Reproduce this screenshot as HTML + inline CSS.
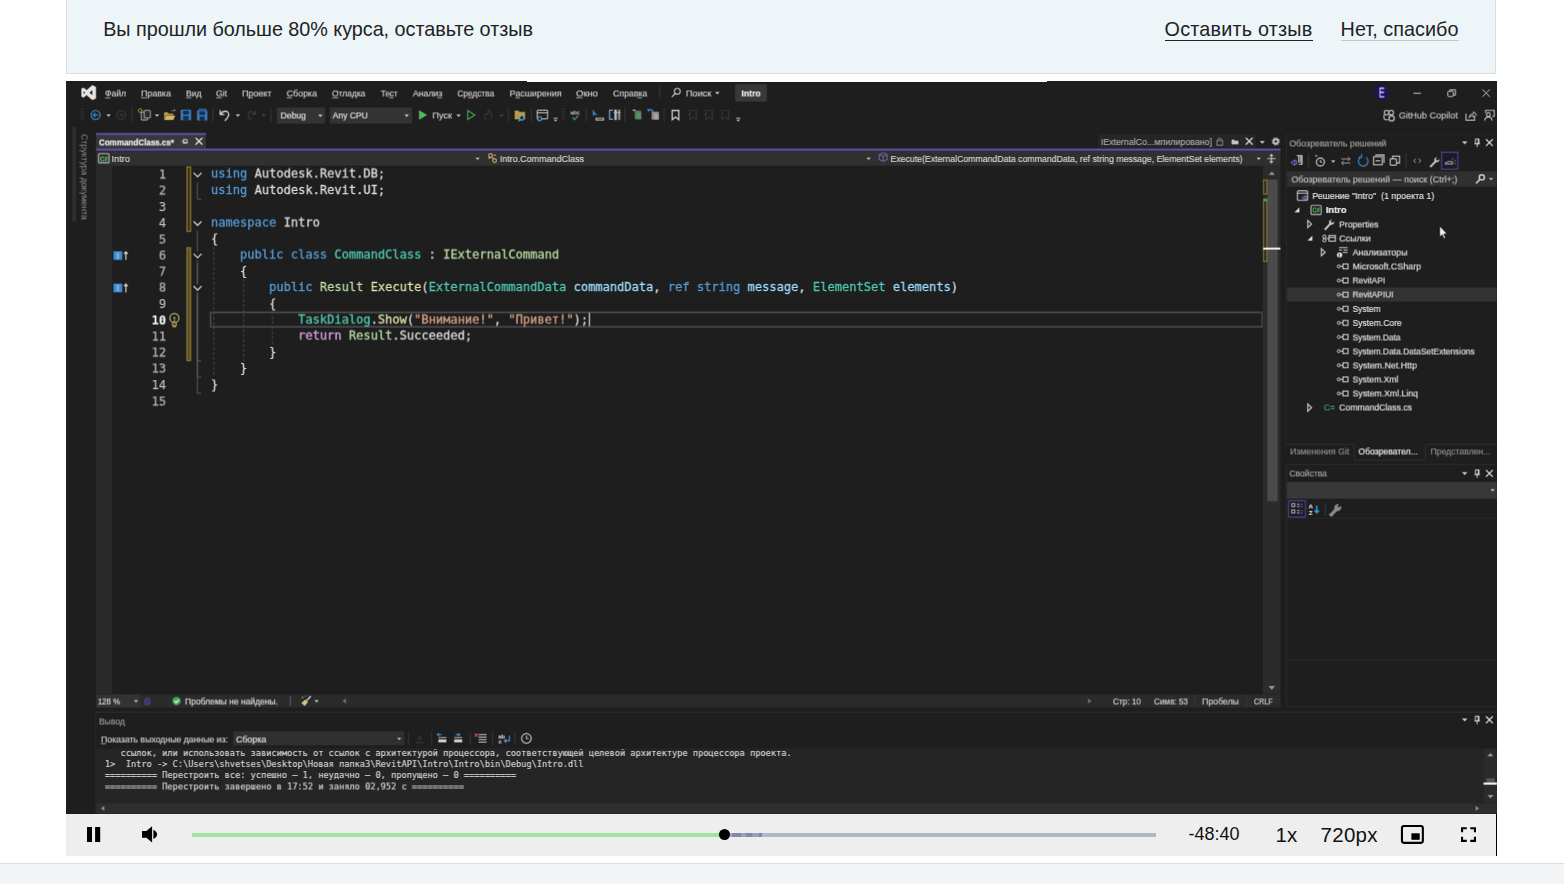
<!DOCTYPE html>
<html lang="ru">
<head>
<meta charset="utf-8">
<title>Видео</title>
<style>
html,body{margin:0;padding:0;background:#fff;}
body{width:1564px;height:884px;overflow:hidden;position:relative;font-family:"Liberation Sans",sans-serif;color:#222;}
.banner{position:absolute;left:66px;top:-16px;width:1428px;height:88px;background:#eef5f9;border:1px solid #dcdcdc;}
.banner .msg{position:absolute;left:36.2px;top:31.5px;font-size:19.8px;line-height:24px;color:#222;white-space:nowrap;letter-spacing:-0.03px;}
.banner a{position:absolute;top:31.5px;font-size:19.8px;line-height:24px;color:#222;text-decoration:none;white-space:nowrap;}
.banner a.leave{left:1097.6px;letter-spacing:0.2px;}
.banner a.no{left:1273.6px;letter-spacing:0.04px;}
.banner i{position:absolute;display:block;}
.banner i.u1{left:1098.3px;top:54.7px;width:147.4px;height:1.8px;background:#222;}
.banner i.u2{left:1274.4px;top:54.9px;width:117.4px;height:1.2px;background:#c3c7ca;}
.player{position:absolute;left:66px;top:81px;width:1431px;height:775px;background:#000;}
.player svg{position:absolute;left:-66px;top:-81px;font-family:"Liberation Sans", sans-serif;}
.topline{position:absolute;left:461px;top:0;width:520px;height:1px;background:#fff;}
.controls{position:absolute;left:0;top:733px;width:1430px;height:42px;background:#eeeeee;}
.controls svg.ic{position:absolute;left:0;top:0;}
.bar{position:absolute;left:126px;top:19px;width:964px;height:4px;background:#b0b8c8;}
.bar i{position:absolute;display:block;top:0;height:4px;}
.bar .played{position:absolute;left:0;top:0;width:531px;height:4px;background:#a0e3a0;}
.bar .knob{position:absolute;left:526.5px;top:-4.1px;width:11.1px;height:11.1px;border-radius:50%;background:#000;}
.controls .t{position:absolute;white-space:nowrap;color:#111;}
.footer{position:absolute;left:0;top:863px;width:1564px;height:21px;background:#f3f4f6;border-top:1px solid #dddddd;}
</style>
</head>
<body>
<div class="banner">
  <div class="msg">Вы прошли больше 80% курса, оставьте отзыв</div>
  <a class="leave">Оставить отзыв</a>
  <a class="no">Нет, спасибо</a>
  <i class="u1"></i><i class="u2"></i>
</div>
<div class="player">
<svg width="1564" height="884" viewBox="0 0 1564 884" xml:space="preserve" style="white-space:pre;will-change:transform;clip-path:inset(81px 67px 70px 66px)">
<g id="vsframe" transform="translate(-0.36 -0.36)">
<rect x="64" y="79" width="1435" height="737" fill="#1e1e1e" />
<path d="M92.3 85.1 L96 86.8 V98.5 L92.3 100.2 L86.6 95.2 L83.6 97.6 L81.4 96.6 V88.7 L83.6 87.7 L86.6 90.1 Z M92.4 90.2 L89.4 92.65 L92.4 95.1 Z M83.6 91.2 V94.1 L85.2 92.65 Z" fill="#e6e6e6" fill-rule="evenodd"/>
<text x="105" y="96.2" font-size="9.52" fill="#cfcfcf" textLength="21" lengthAdjust="spacingAndGlyphs"  stroke="#cfcfcf" stroke-width=".18">Файл</text>
<line x1="105" y1="97.9" x2="110.5" y2="97.9" stroke="#bdbdbd" stroke-width="0.8" />
<text x="141" y="96.2" font-size="9.52" fill="#cfcfcf" textLength="30" lengthAdjust="spacingAndGlyphs"  stroke="#cfcfcf" stroke-width=".18">Правка</text>
<line x1="141" y1="97.9" x2="147" y2="97.9" stroke="#bdbdbd" stroke-width="0.8" />
<text x="186" y="96.2" font-size="9.52" fill="#cfcfcf" textLength="15.5" lengthAdjust="spacingAndGlyphs"  stroke="#cfcfcf" stroke-width=".18">Вид</text>
<line x1="186" y1="97.9" x2="191.3" y2="97.9" stroke="#bdbdbd" stroke-width="0.8" />
<text x="216" y="96.2" font-size="9.52" fill="#cfcfcf" textLength="11" lengthAdjust="spacingAndGlyphs"  stroke="#cfcfcf" stroke-width=".18">Git</text>
<line x1="216" y1="97.9" x2="222" y2="97.9" stroke="#bdbdbd" stroke-width="0.8" />
<text x="242" y="96.2" font-size="9.52" fill="#cfcfcf" textLength="29.6" lengthAdjust="spacingAndGlyphs"  stroke="#cfcfcf" stroke-width=".18">Проект</text>
<line x1="248" y1="97.9" x2="253" y2="97.9" stroke="#bdbdbd" stroke-width="0.8" />
<text x="286.6" y="96.2" font-size="9.52" fill="#cfcfcf" textLength="30.4" lengthAdjust="spacingAndGlyphs"  stroke="#cfcfcf" stroke-width=".18">Сборка</text>
<line x1="286.6" y1="97.9" x2="292.1" y2="97.9" stroke="#bdbdbd" stroke-width="0.8" />
<text x="332" y="96.2" font-size="9.52" fill="#cfcfcf" textLength="33.4" lengthAdjust="spacingAndGlyphs"  stroke="#cfcfcf" stroke-width=".18">Отладка</text>
<line x1="332" y1="97.9" x2="338.5" y2="97.9" stroke="#bdbdbd" stroke-width="0.8" />
<text x="380.8" y="96.2" font-size="9.52" fill="#cfcfcf" textLength="16.7" lengthAdjust="spacingAndGlyphs"  stroke="#cfcfcf" stroke-width=".18">Тест</text>
<line x1="389" y1="97.9" x2="393.5" y2="97.9" stroke="#bdbdbd" stroke-width="0.8" />
<text x="412.8" y="96.2" font-size="9.52" fill="#cfcfcf" textLength="29.6" lengthAdjust="spacingAndGlyphs"  stroke="#cfcfcf" stroke-width=".18">Анализ</text>
<line x1="437.5" y1="97.9" x2="442" y2="97.9" stroke="#bdbdbd" stroke-width="0.8" />
<text x="457.3" y="96.2" font-size="9.52" fill="#cfcfcf" textLength="36.9" lengthAdjust="spacingAndGlyphs"  stroke="#cfcfcf" stroke-width=".18">Средства</text>
<line x1="468" y1="97.9" x2="473.5" y2="97.9" stroke="#bdbdbd" stroke-width="0.8" />
<text x="509.7" y="96.2" font-size="9.52" fill="#cfcfcf" textLength="51.9" lengthAdjust="spacingAndGlyphs"  stroke="#cfcfcf" stroke-width=".18">Расширения</text>
<line x1="515.5" y1="97.9" x2="520" y2="97.9" stroke="#bdbdbd" stroke-width="0.8" />
<text x="576" y="96.2" font-size="9.52" fill="#cfcfcf" textLength="22" lengthAdjust="spacingAndGlyphs"  stroke="#cfcfcf" stroke-width=".18">Окно</text>
<line x1="576" y1="97.9" x2="582.5" y2="97.9" stroke="#bdbdbd" stroke-width="0.8" />
<text x="613" y="96.2" font-size="9.52" fill="#cfcfcf" textLength="34.3" lengthAdjust="spacingAndGlyphs"  stroke="#cfcfcf" stroke-width=".18">Справка</text>
<line x1="637.5" y1="97.9" x2="642" y2="97.9" stroke="#bdbdbd" stroke-width="0.8" />
<line x1="659.7" y1="86" x2="659.7" y2="98.5" stroke="#3d3d3d" stroke-width="1" />
<circle cx="677.3" cy="91.3" r="2.9" fill="none" stroke="#c8c8c8" stroke-width="1.1" />
<line x1="675.2" y1="93.6" x2="671.8" y2="97" stroke="#c8c8c8" stroke-width="1.2" />
<text x="685.9" y="96.2" font-size="9.52" fill="#cfcfcf" textLength="25.4" lengthAdjust="spacingAndGlyphs"  stroke="#cfcfcf" stroke-width=".18">Поиск</text>
<path d="M715.1 91.9h4.4l-2.2 2.6z" fill="#c8c8c8" />
<rect x="735" y="84" width="32" height="17.6" fill="#383838" rx="1.5"/>
<text x="741.5" y="96.2" font-size="9.52" fill="#f2f2f2" textLength="19.2" lengthAdjust="spacingAndGlyphs" font-weight="bold"  stroke="#f2f2f2" stroke-width=".18">Intro</text>
<circle cx="1381.8" cy="92.5" r="7.3" fill="#20135a" />
<text x="1378.8" y="97.2" font-size="14.12" fill="#d6d0f2" textLength="5.8" lengthAdjust="spacingAndGlyphs"  stroke="#d6d0f2" stroke-width=".18">E</text>
<line x1="1413.4" y1="93.3" x2="1421" y2="93.3" stroke="#c8c8c8" stroke-width="1" />
<rect x="1447.8" y="91.3" width="5.6" height="5.2" fill="none" stroke="#c8c8c8" stroke-width="1" rx="1"/>
<path d="M1449.8 91.2 V89.8 h5.7 v5.4 h-1.8" fill="none" stroke="#c8c8c8" stroke-width="1" />
<path d="M1482.3 89.3 l7.6 7.6 M1489.9 89.3 l-7.6 7.6" fill="none" stroke="#c8c8c8" stroke-width="1" />
<line x1="81.3" y1="108.5" x2="81.3" y2="121.5" stroke="#424242" stroke-width="1.2" stroke-dasharray="1.2 1.3"/>
<line x1="83.3" y1="108.5" x2="83.3" y2="121.5" stroke="#424242" stroke-width="1.2" stroke-dasharray="1.2 1.3"/>
<circle cx="95.6" cy="115" r="4.5" fill="none" stroke="#3a80bd" stroke-width="1.4" />
<path d="M98 115 h-4.6 M95.4 112.9 l-2.1 2.1 l2.1 2.1" fill="none" stroke="#3a80bd" stroke-width="1.2" />
<path d="M106.4 114.3h4.4l-2.2 2.6z" fill="#c8c8c8" />
<circle cx="121.1" cy="115" r="4.4" fill="none" stroke="#3d3d3d" stroke-width="1.1" />
<path d="M118.8 115 h4.4 M121.3 113 l2 2 l-2 2" fill="none" stroke="#3d3d3d" stroke-width="1" />
<line x1="132" y1="108" x2="132" y2="122" stroke="#3a3a3a" stroke-width="1" />
<rect x="141.3" y="112.2" width="6.4" height="7.8" fill="#2a2a2a" stroke="#9a9a9a" stroke-width="1.1" rx="1"/>
<rect x="144.2" y="110.3" width="6.2" height="7.6" fill="#2a2a2a" stroke="#9a9a9a" stroke-width="1.1" rx="1"/>
<path d="M140.2 108.4 l2.2 2.2 l-2.2 2.2 l-2.2-2.2z" fill="#1e1e1e" stroke="#c9a94a" stroke-width="1" />
<path d="M154.8 114.3h4.4l-2.2 2.6z" fill="#c8c8c8" />
<path d="M164.2 112.4 h3.4 l1 1.2 h4.8 v1.6 h-7.2 l-2 4.6z" fill="#c4a64f" />
<path d="M166.4 115.7 h8.8 l-1.9 4.3 h-9.1z" fill="#d4b862" />
<path d="M170.8 112 q1.4-2.4 3.6-2.2 l-.3-1 1.7 1.7 -2.2 1 .3-.9 q-1.6-.1-2.4 1.4z" fill="#7fa1bd" />
<rect x="180.6" y="109.7" width="10.6" height="10.6" fill="#3a7ab8" rx="1.2"/>
<rect x="182.9" y="110.8" width="6" height="3.7" fill="#12324f" />
<rect x="183.2" y="116" width="5.4" height="4.3" fill="#12324f" />
<rect x="197" y="110.2" width="10.4" height="10.4" fill="#3a7ab8" rx="1.2"/>
<rect x="199.3" y="111.3" width="5.8" height="3.7" fill="#12324f" />
<rect x="199.6" y="116.5" width="5.2" height="4.1" fill="#12324f" />
<path d="M198.6 109.2 h8" fill="none" stroke="#3a7ab8" stroke-width="1" />
<line x1="212.8" y1="108" x2="212.8" y2="122" stroke="#3a3a3a" stroke-width="1" />
<path d="M220.2 110.2 v4.3 h4.3 M220.6 114.2 q3.2-4.6 6.8-2.4 q3.6 3-2.6 9" fill="none" stroke="#d0d0d0" stroke-width="1.35" />
<path d="M235.7 114.3h4.4l-2.2 2.6z" fill="#c8c8c8" />
<path d="M255.3 110.6 v3.8 h-3.8 M255 114.2 q-3-4-6-2 q-3 3 2.2 8" fill="none" stroke="#3d3d3d" stroke-width="1.2" />
<path d="M261.6 114.3h4.4l-2.2 2.6z" fill="#454545" />
<line x1="271" y1="108" x2="271" y2="122" stroke="#3a3a3a" stroke-width="1" />
<rect x="276.8" y="107.4" width="48.4" height="16.2" fill="#333333" />
<text x="280.5" y="118.2" font-size="9.52" fill="#e0e0e0" textLength="25.5" lengthAdjust="spacingAndGlyphs"  stroke="#e0e0e0" stroke-width=".18">Debug</text>
<path d="M318.2 114.5h4.4l-2.2 2.6z" fill="#c8c8c8" />
<rect x="329.8" y="107.4" width="82.4" height="16.2" fill="#333333" />
<text x="332.6" y="118.2" font-size="9.52" fill="#e0e0e0" textLength="35.3" lengthAdjust="spacingAndGlyphs"  stroke="#e0e0e0" stroke-width=".18">Any CPU</text>
<path d="M404.5 114.5h4.4l-2.2 2.6z" fill="#c8c8c8" />
<path d="M419 110.2 v9.6 l8.2-4.8z" fill="#52b85a" />
<text x="432.4" y="118.3" font-size="9.52" fill="#cfcfcf" textLength="19.6" lengthAdjust="spacingAndGlyphs"  stroke="#cfcfcf" stroke-width=".18">Пуск</text>
<path d="M456.4 114.5h4.4l-2.2 2.6z" fill="#c8c8c8" />
<path d="M467.8 110.6 v8.8 l7-4.4z" fill="none" stroke="#3f9b4a" stroke-width="1.3" />
<path d="M486.5 119.5 q-3.5-2.5-.5-6 q1 1.6 2.2 0 q.6-2-.6-3.6 q5.5 2.5 3.8 8 q-.6 1.4-2 1.8" fill="none" stroke="#383838" stroke-width="1.2" />
<path d="M499.2 114.5h4.4l-2.2 2.6z" fill="#454545" />
<line x1="508.4" y1="108" x2="508.4" y2="122" stroke="#3a3a3a" stroke-width="1" />
<path d="M514.7 110.6 h3.8 l1 1.2 h5.6 v7.6 h-10.4z" fill="#b99a48" />
<circle cx="521.8" cy="117.8" r="2.2" fill="#1e1e1e" stroke="#58a6e0" stroke-width="1.2" />
<line x1="520.2" y1="119.6" x2="518.6" y2="121.4" stroke="#58a6e0" stroke-width="1.2" />
<line x1="531.3" y1="108" x2="531.3" y2="122" stroke="#3a3a3a" stroke-width="1" />
<rect x="537.2" y="110.2" width="10.4" height="8.6" fill="none" stroke="#bdbdbd" stroke-width="1.1" rx="1"/>
<line x1="537.2" y1="112.8" x2="547.6" y2="112.8" stroke="#bdbdbd" stroke-width="1.1" />
<circle cx="539.6" cy="118.6" r="2" fill="#1e1e1e" stroke="#58a6e0" stroke-width="1.1" />
<line x1="553.6" y1="118.2" x2="557.6" y2="118.2" stroke="#bdbdbd" stroke-width="1" />
<path d="M553.8 119.6h3.6l-1.8 2z" fill="#c8c8c8" />
<line x1="562.3" y1="108.5" x2="562.3" y2="121.5" stroke="#424242" stroke-width="1.2" stroke-dasharray="1.2 1.3"/>
<line x1="564.3" y1="108.5" x2="564.3" y2="121.5" stroke="#424242" stroke-width="1.2" stroke-dasharray="1.2 1.3"/>
<text x="570.3" y="114.4" font-size="6.2" fill="#bdbdbd" textLength="9.7" lengthAdjust="spacingAndGlyphs"  stroke="#bdbdbd" stroke-width=".18">abc</text>
<path d="M572.6 117.4 l2 2.2 l3.6-4" fill="none" stroke="#459a50" stroke-width="1.3" />
<line x1="586.3" y1="108" x2="586.3" y2="122" stroke="#3a3a3a" stroke-width="1" />
<path d="M592.8 109.4 v6.8 l1.8-1.6 l3 1.6z" fill="#3f86c8" />
<rect x="595.6" y="117.6" width="8.4" height="3" fill="#bdbdbd" />
<rect x="596.8" y="118.4" width="6" height="1.2" fill="#3c3c3c" />
<path d="M613 110.2 h-3.4 v9 h3.4" fill="none" stroke="#7fb4e0" stroke-width="1.1" />
<rect x="614.4" y="109.6" width="2.4" height="10.4" fill="#bdbdbd" />
<rect x="618" y="109.6" width="2.4" height="10.4" fill="#8a8a8a" />
<line x1="613.6" y1="112.6" x2="620.6" y2="112.6" stroke="#bdbdbd" stroke-width="1" />
<line x1="624.8" y1="108" x2="624.8" y2="122" stroke="#3a3a3a" stroke-width="1" />
<rect x="634.6" y="110.6" width="6.6" height="8.6" fill="#4f7a52" />
<rect x="632.6" y="109.6" width="3" height="1.2" fill="#bdbdbd" />
<rect x="636.4" y="112.4" width="4.8" height="6.8" fill="#5d8f61" />
<rect x="651.6" y="111.6" width="7.2" height="8" fill="#8a8a8a" />
<rect x="653.8" y="113.6" width="5" height="6" fill="#a3a3a3" />
<path d="M648 110.8 q2.6-2.6 4.8 0 l-1.2 1.4 M648 110.8 v-1.8 M648 110.8 h1.8" fill="none" stroke="#3f8fd0" stroke-width="1.2" />
<line x1="664" y1="108" x2="664" y2="122" stroke="#3a3a3a" stroke-width="1" />
<path d="M672.2 110.4 h6.6 v9.4 l-3.3-2.8 l-3.3 2.8z" fill="none" stroke="#d0d0d0" stroke-width="1.3" />
<path d="M689.8 110.4 h6.6 v9.4 l-3.3-2.8 l-3.3 2.8z" fill="none" stroke="#383838" stroke-width="1.1" />
<path d="M705.8 110.4 h6.6 v9.4 l-3.3-2.8 l-3.3 2.8z" fill="none" stroke="#383838" stroke-width="1.1" />
<path d="M722 110.4 h6.6 v9.4 l-3.3-2.8 l-3.3 2.8z" fill="none" stroke="#383838" stroke-width="1.1" />
<line x1="688" y1="114" x2="691" y2="114" stroke="#383838" stroke-width="1" />
<line x1="704" y1="114" x2="707" y2="114" stroke="#383838" stroke-width="1" />
<line x1="736" y1="118.2" x2="740.4" y2="118.2" stroke="#bdbdbd" stroke-width="1" />
<path d="M736.4 119.6h3.6l-1.8 2z" fill="#c8c8c8" />
<circle cx="1386.6" cy="112.6" r="2.3" fill="none" stroke="#c0c0c0" stroke-width="1.1" />
<circle cx="1391.2" cy="112.6" r="2.3" fill="none" stroke="#c0c0c0" stroke-width="1.1" />
<path d="M1384 114.6 v3.4 q0 1.8 2 1.8 h2" fill="none" stroke="#c0c0c0" stroke-width="1.1" />
<circle cx="1391.6" cy="118.4" r="2.6" fill="#1e1e1e" stroke="#c0c0c0" stroke-width="1.3" />
<text x="1398.8" y="118.6" font-size="9.52" fill="#c4c4c4" textLength="59" lengthAdjust="spacingAndGlyphs"  stroke="#c4c4c4" stroke-width=".18">GitHub Copilot</text>
<path d="M1466 113.6 v6.6 h8.6 v-3" fill="none" stroke="#c0c0c0" stroke-width="1.1" />
<path d="M1469 117.6 q.6-4 4.6-4 v-2 l3 3 l-3 3 v-2 q-2.6 0-4.6 2z" fill="none" stroke="#c0c0c0" stroke-width="1" />
<path d="M1485.6 113 v-2.6 h8.6 v6 h-2" fill="none" stroke="#c0c0c0" stroke-width="1.1" />
<circle cx="1488.4" cy="114.6" r="1.9" fill="none" stroke="#c0c0c0" stroke-width="1.1" />
<path d="M1484.6 120.6 q.6-3.6 3.8-3.6 q3.2 0 3.8 3.6" fill="none" stroke="#c0c0c0" stroke-width="1.1" />
<rect x="72.3" y="127" width="3.8" height="94.5" fill="#303030" />
<text transform='translate(81.2 134.2) rotate(90)' font-size='8.6' fill='#8f8f8f' textLength='85.5' lengthAdjust='spacingAndGlyphs'>Структура документа</text>
<rect x="96" y="133" width="110" height="15.5" fill="#383838" />
<rect x="96" y="133" width="110" height="2" fill="#5751a3" />
<text x="99" y="145.5" font-size="9.52" fill="#f4f4f4" textLength="75" lengthAdjust="spacingAndGlyphs" font-weight="bold"  stroke="#f4f4f4" stroke-width=".18">CommandClass.cs*</text>
<path d="M181.6 141.4 h2 M183.6 138.8 v5.2 M183.6 139.6 h3.6 v3.6 h-3.6 M183.6 142.4 h3.6" fill="none" stroke="#cfcfcf" stroke-width="1" />
<path d="M195.6 137.8 l6.8 6.8 M202.4 137.8 l-6.8 6.8" fill="none" stroke="#e6e6e6" stroke-width="1.3" />
<rect x="1098" y="134" width="158" height="14" fill="#262626" />
<text x="1100.8" y="145" font-size="9.52" fill="#a8a8a8" textLength="111.2" lengthAdjust="spacingAndGlyphs"  stroke="#a8a8a8" stroke-width=".18">IExternalCo...мпилировано]</text>
<rect x="1217" y="140.6" width="5.6" height="4.6" fill="none" stroke="#8a8a8a" stroke-width="1"/>
<path d="M1218.2 140.4 v-1.4 q1.6-2 3.2 0 v1.4" fill="none" stroke="#8a8a8a" stroke-width="1" />
<path d="M1231.6 139.6 h2.4 l.8 1 h3.6 v3.8 h-6.8z" fill="#c4c4c4" />
<path d="M1245.8 137.8 l6.8 6.8 M1252.6 137.8 l-6.8 6.8" fill="none" stroke="#dcdcdc" stroke-width="1.3" />
<path d="M1259.8 141h5l-2.5 2.8z" fill="#c8c8c8" />
<circle cx="1275.8" cy="141.4" r="2.2" fill="none" stroke="#c4c4c4" stroke-width="1.9" />
<circle cx="1275.8" cy="141.4" r="3.6" fill="none" stroke="#c4c4c4" stroke-width="1.1" stroke-dasharray="1.4 1.43"/>
<rect x="96" y="148.5" width="1184.5" height="2.4" fill="#5751a3" />
<rect x="96" y="150.9" width="1184.5" height="15.2" fill="#303030" />
<rect x="98.6" y="153.6" width="10.4" height="9.2" fill="none" stroke="#b8b8b8" stroke-width="1.1" rx="1"/>
<text x="100" y="161.4" font-size="6.4" fill="#5bbf66" textLength="7.6" lengthAdjust="spacingAndGlyphs" font-weight="bold"  stroke="#5bbf66" stroke-width=".18">C#</text>
<text x="111.7" y="162" font-size="9.52" fill="#d8d8d8" textLength="18.3" lengthAdjust="spacingAndGlyphs"  stroke="#d8d8d8" stroke-width=".18">Intro</text>
<path d="M475.5 157.6h4.2l-2.1 2.4z" fill="#c8c8c8" />
<circle cx="490.6" cy="155.6" r="1.9" fill="none" stroke="#d6b26a" stroke-width="1.1" />
<circle cx="494.6" cy="160.6" r="1.9" fill="none" stroke="#d6b26a" stroke-width="1.1" />
<path d="M488.4 158.4 l2.2-1 M492 157 l1.6 2 M495.8 155 l-2 .4" fill="none" stroke="#cfcfcf" stroke-width="1" />
<text x="499.8" y="162" font-size="9.52" fill="#d8d8d8" textLength="84.2" lengthAdjust="spacingAndGlyphs"  stroke="#d8d8d8" stroke-width=".18">Intro.CommandClass</text>
<path d="M866.5 157.6h4.2l-2.1 2.4z" fill="#c8c8c8" />
<path d="M879.2 154.6 l4 -1.8 l4 1.8 v5 l-4 1.8 l-4 -1.8z M879.2 154.6 l4 1.8 l4-1.8 M883.2 156.4 v5" fill="none" stroke="#7d69b4" stroke-width="1" />
<text x="890.5" y="162" font-size="9.52" fill="#d8d8d8" textLength="352.1" lengthAdjust="spacingAndGlyphs"  stroke="#d8d8d8" stroke-width=".18">Execute(ExternalCommandData commandData, ref string message, ElementSet elements)</text>
<path d="M1256.6 157.6h4.2l-2.1 2.4z" fill="#c8c8c8" />
<path d="M1271.4 154.4 v8.4 M1267.2 158.6 h8.4 M1269.8 156 l1.6-1.6 1.6 1.6 M1269.8 161.2 l1.6 1.6 1.6-1.6" fill="none" stroke="#c4c4c4" stroke-width="1.1" />
<rect x="96" y="166.1" width="16.6" height="528.2" fill="#292929" />
<rect x="112.6" y="166.1" width="1150" height="528.2" fill="#1e1e1e" />
<rect x="210.6" y="312.4" width="1051.6" height="14.4" fill="none" stroke="#4a4a4a" stroke-width="1.8"/>
<line x1="213.8" y1="247" x2="213.8" y2="377" stroke="#4a4a4a" stroke-width="1" stroke-dasharray="3 2"/>
<line x1="243.7" y1="279" x2="243.7" y2="361" stroke="#4a4a4a" stroke-width="1" stroke-dasharray="3 2"/>
<line x1="272.4" y1="311" x2="272.4" y2="344" stroke="#4a4a4a" stroke-width="1" stroke-dasharray="3 2"/>
<path d="M197.4 182 V199.2 h4" fill="none" stroke="#5a5a5a" stroke-width="1" />
<path d="M197.4 230.5 V393.4 h4" fill="none" stroke="#5a5a5a" stroke-width="1" />
<path d="M197.4 263 V377.2 h4" fill="none" stroke="#5a5a5a" stroke-width="1" />
<path d="M197.4 295.5 V361 h4" fill="none" stroke="#5a5a5a" stroke-width="1" />
<rect x="187" y="167" width="3.6" height="64.4" fill="#3a331c" stroke="#93812f" stroke-width="1.1"/>
<rect x="187" y="247.8" width="3.6" height="112.8" fill="#5a4b2c" stroke="#93812f" stroke-width="1.1"/>
<text x="166.2" y="178.5" font-size="12.05" fill="#b4b4b4" font-family='"DejaVu Sans Mono", "Liberation Mono", monospace' text-anchor="end" stroke="#b4b4b4" stroke-width=".25">1</text>
<text x="211" y="177.8" font-size="12.05" fill="#569cd6" textLength="36.265" lengthAdjust="spacingAndGlyphs" font-family='"DejaVu Sans Mono", "Liberation Mono", monospace' stroke="#569cd6" stroke-width=".3">using</text>
<text x="254.518" y="177.8" font-size="12.05" fill="#dadada" textLength="130.554" lengthAdjust="spacingAndGlyphs" font-family='"DejaVu Sans Mono", "Liberation Mono", monospace' stroke="#dadada" stroke-width=".3">Autodesk.Revit.DB;</text>
<text x="166.2" y="194.69" font-size="12.05" fill="#b4b4b4" font-family='"DejaVu Sans Mono", "Liberation Mono", monospace' text-anchor="end" stroke="#b4b4b4" stroke-width=".25">2</text>
<text x="211" y="193.99" font-size="12.05" fill="#569cd6" textLength="36.265" lengthAdjust="spacingAndGlyphs" font-family='"DejaVu Sans Mono", "Liberation Mono", monospace' stroke="#569cd6" stroke-width=".3">using</text>
<text x="254.518" y="193.99" font-size="12.05" fill="#dadada" textLength="130.554" lengthAdjust="spacingAndGlyphs" font-family='"DejaVu Sans Mono", "Liberation Mono", monospace' stroke="#dadada" stroke-width=".3">Autodesk.Revit.UI;</text>
<text x="166.2" y="210.88" font-size="12.05" fill="#b4b4b4" font-family='"DejaVu Sans Mono", "Liberation Mono", monospace' text-anchor="end" stroke="#b4b4b4" stroke-width=".25">3</text>
<text x="166.2" y="227.07" font-size="12.05" fill="#b4b4b4" font-family='"DejaVu Sans Mono", "Liberation Mono", monospace' text-anchor="end" stroke="#b4b4b4" stroke-width=".25">4</text>
<text x="211" y="226.37" font-size="12.05" fill="#569cd6" textLength="65.277" lengthAdjust="spacingAndGlyphs" font-family='"DejaVu Sans Mono", "Liberation Mono", monospace' stroke="#569cd6" stroke-width=".3">namespace</text>
<text x="283.53" y="226.37" font-size="12.05" fill="#dadada" textLength="36.265" lengthAdjust="spacingAndGlyphs" font-family='"DejaVu Sans Mono", "Liberation Mono", monospace' stroke="#dadada" stroke-width=".3">Intro</text>
<text x="166.2" y="243.26" font-size="12.05" fill="#b4b4b4" font-family='"DejaVu Sans Mono", "Liberation Mono", monospace' text-anchor="end" stroke="#b4b4b4" stroke-width=".25">5</text>
<text x="211" y="242.56" font-size="12.05" fill="#dadada" textLength="7.253" lengthAdjust="spacingAndGlyphs" font-family='"DejaVu Sans Mono", "Liberation Mono", monospace' stroke="#dadada" stroke-width=".3">{</text>
<text x="166.2" y="259.45" font-size="12.05" fill="#b4b4b4" font-family='"DejaVu Sans Mono", "Liberation Mono", monospace' text-anchor="end" stroke="#b4b4b4" stroke-width=".25">6</text>
<text x="240.012" y="258.75" font-size="12.05" fill="#569cd6" textLength="43.518" lengthAdjust="spacingAndGlyphs" font-family='"DejaVu Sans Mono", "Liberation Mono", monospace' stroke="#569cd6" stroke-width=".3">public</text>
<text x="290.783" y="258.75" font-size="12.05" fill="#569cd6" textLength="36.265" lengthAdjust="spacingAndGlyphs" font-family='"DejaVu Sans Mono", "Liberation Mono", monospace' stroke="#569cd6" stroke-width=".3">class</text>
<text x="334.301" y="258.75" font-size="12.05" fill="#4ec9b0" textLength="87.036" lengthAdjust="spacingAndGlyphs" font-family='"DejaVu Sans Mono", "Liberation Mono", monospace' stroke="#4ec9b0" stroke-width=".3">CommandClass</text>
<text x="428.59" y="258.75" font-size="12.05" fill="#dadada" textLength="7.253" lengthAdjust="spacingAndGlyphs" font-family='"DejaVu Sans Mono", "Liberation Mono", monospace' stroke="#dadada" stroke-width=".3">:</text>
<text x="443.096" y="258.75" font-size="12.05" fill="#b8d7a3" textLength="116.048" lengthAdjust="spacingAndGlyphs" font-family='"DejaVu Sans Mono", "Liberation Mono", monospace' stroke="#b8d7a3" stroke-width=".3">IExternalCommand</text>
<text x="166.2" y="275.64" font-size="12.05" fill="#b4b4b4" font-family='"DejaVu Sans Mono", "Liberation Mono", monospace' text-anchor="end" stroke="#b4b4b4" stroke-width=".25">7</text>
<text x="240.012" y="274.94" font-size="12.05" fill="#dadada" textLength="7.253" lengthAdjust="spacingAndGlyphs" font-family='"DejaVu Sans Mono", "Liberation Mono", monospace' stroke="#dadada" stroke-width=".3">{</text>
<text x="166.2" y="291.83" font-size="12.05" fill="#b4b4b4" font-family='"DejaVu Sans Mono", "Liberation Mono", monospace' text-anchor="end" stroke="#b4b4b4" stroke-width=".25">8</text>
<text x="269.024" y="291.13" font-size="12.05" fill="#569cd6" textLength="43.518" lengthAdjust="spacingAndGlyphs" font-family='"DejaVu Sans Mono", "Liberation Mono", monospace' stroke="#569cd6" stroke-width=".3">public</text>
<text x="319.795" y="291.13" font-size="12.05" fill="#b8d7a3" textLength="43.518" lengthAdjust="spacingAndGlyphs" font-family='"DejaVu Sans Mono", "Liberation Mono", monospace' stroke="#b8d7a3" stroke-width=".3">Result</text>
<text x="370.566" y="291.13" font-size="12.05" fill="#dcdcaa" textLength="50.771" lengthAdjust="spacingAndGlyphs" font-family='"DejaVu Sans Mono", "Liberation Mono", monospace' stroke="#dcdcaa" stroke-width=".3">Execute</text>
<text x="421.337" y="291.13" font-size="12.05" fill="#dadada" textLength="7.253" lengthAdjust="spacingAndGlyphs" font-family='"DejaVu Sans Mono", "Liberation Mono", monospace' stroke="#dadada" stroke-width=".3">(</text>
<text x="428.59" y="291.13" font-size="12.05" fill="#4ec9b0" textLength="137.807" lengthAdjust="spacingAndGlyphs" font-family='"DejaVu Sans Mono", "Liberation Mono", monospace' stroke="#4ec9b0" stroke-width=".3">ExternalCommandData</text>
<text x="573.65" y="291.13" font-size="12.05" fill="#9cdcfe" textLength="79.783" lengthAdjust="spacingAndGlyphs" font-family='"DejaVu Sans Mono", "Liberation Mono", monospace' stroke="#9cdcfe" stroke-width=".3">commandData</text>
<text x="653.433" y="291.13" font-size="12.05" fill="#dadada" textLength="7.253" lengthAdjust="spacingAndGlyphs" font-family='"DejaVu Sans Mono", "Liberation Mono", monospace' stroke="#dadada" stroke-width=".3">,</text>
<text x="667.939" y="291.13" font-size="12.05" fill="#569cd6" textLength="21.759" lengthAdjust="spacingAndGlyphs" font-family='"DejaVu Sans Mono", "Liberation Mono", monospace' stroke="#569cd6" stroke-width=".3">ref</text>
<text x="696.951" y="291.13" font-size="12.05" fill="#569cd6" textLength="43.518" lengthAdjust="spacingAndGlyphs" font-family='"DejaVu Sans Mono", "Liberation Mono", monospace' stroke="#569cd6" stroke-width=".3">string</text>
<text x="747.722" y="291.13" font-size="12.05" fill="#9cdcfe" textLength="50.771" lengthAdjust="spacingAndGlyphs" font-family='"DejaVu Sans Mono", "Liberation Mono", monospace' stroke="#9cdcfe" stroke-width=".3">message</text>
<text x="798.493" y="291.13" font-size="12.05" fill="#dadada" textLength="7.253" lengthAdjust="spacingAndGlyphs" font-family='"DejaVu Sans Mono", "Liberation Mono", monospace' stroke="#dadada" stroke-width=".3">,</text>
<text x="812.999" y="291.13" font-size="12.05" fill="#4ec9b0" textLength="72.53" lengthAdjust="spacingAndGlyphs" font-family='"DejaVu Sans Mono", "Liberation Mono", monospace' stroke="#4ec9b0" stroke-width=".3">ElementSet</text>
<text x="892.782" y="291.13" font-size="12.05" fill="#9cdcfe" textLength="58.024" lengthAdjust="spacingAndGlyphs" font-family='"DejaVu Sans Mono", "Liberation Mono", monospace' stroke="#9cdcfe" stroke-width=".3">elements</text>
<text x="950.806" y="291.13" font-size="12.05" fill="#dadada" textLength="7.253" lengthAdjust="spacingAndGlyphs" font-family='"DejaVu Sans Mono", "Liberation Mono", monospace' stroke="#dadada" stroke-width=".3">)</text>
<text x="166.2" y="308.02" font-size="12.05" fill="#b4b4b4" font-family='"DejaVu Sans Mono", "Liberation Mono", monospace' text-anchor="end" stroke="#b4b4b4" stroke-width=".25">9</text>
<text x="269.024" y="307.32" font-size="12.05" fill="#dadada" textLength="7.253" lengthAdjust="spacingAndGlyphs" font-family='"DejaVu Sans Mono", "Liberation Mono", monospace' stroke="#dadada" stroke-width=".3">{</text>
<text x="166.2" y="324.21" font-size="12.05" fill="#f2f2f2" font-weight="bold" font-family='"DejaVu Sans Mono", "Liberation Mono", monospace' text-anchor="end"  stroke="#f2f2f2" stroke-width=".18">10</text>
<text x="298.036" y="323.51" font-size="12.05" fill="#4ec9b0" textLength="72.53" lengthAdjust="spacingAndGlyphs" font-family='"DejaVu Sans Mono", "Liberation Mono", monospace' stroke="#4ec9b0" stroke-width=".3">TaskDialog</text>
<text x="370.566" y="323.51" font-size="12.05" fill="#dadada" textLength="7.253" lengthAdjust="spacingAndGlyphs" font-family='"DejaVu Sans Mono", "Liberation Mono", monospace' stroke="#dadada" stroke-width=".3">.</text>
<text x="377.819" y="323.51" font-size="12.05" fill="#dcdcaa" textLength="29.012" lengthAdjust="spacingAndGlyphs" font-family='"DejaVu Sans Mono", "Liberation Mono", monospace' stroke="#dcdcaa" stroke-width=".3">Show</text>
<text x="406.831" y="323.51" font-size="12.05" fill="#dadada" textLength="7.253" lengthAdjust="spacingAndGlyphs" font-family='"DejaVu Sans Mono", "Liberation Mono", monospace' stroke="#dadada" stroke-width=".3">(</text>
<text x="414.084" y="323.51" font-size="12.05" fill="#d69d85" textLength="79.783" lengthAdjust="spacingAndGlyphs" font-family='"DejaVu Sans Mono", "Liberation Mono", monospace' stroke="#d69d85" stroke-width=".3">"Внимание!"</text>
<text x="493.867" y="323.51" font-size="12.05" fill="#dadada" textLength="7.253" lengthAdjust="spacingAndGlyphs" font-family='"DejaVu Sans Mono", "Liberation Mono", monospace' stroke="#dadada" stroke-width=".3">,</text>
<text x="508.373" y="323.51" font-size="12.05" fill="#d69d85" textLength="65.277" lengthAdjust="spacingAndGlyphs" font-family='"DejaVu Sans Mono", "Liberation Mono", monospace' stroke="#d69d85" stroke-width=".3">"Привет!"</text>
<text x="573.65" y="323.51" font-size="12.05" fill="#dadada" textLength="14.506" lengthAdjust="spacingAndGlyphs" font-family='"DejaVu Sans Mono", "Liberation Mono", monospace' stroke="#dadada" stroke-width=".3">);</text>
<text x="166.2" y="340.4" font-size="12.05" fill="#b4b4b4" font-family='"DejaVu Sans Mono", "Liberation Mono", monospace' text-anchor="end" stroke="#b4b4b4" stroke-width=".25">11</text>
<text x="298.036" y="339.7" font-size="12.05" fill="#d8a0df" textLength="43.518" lengthAdjust="spacingAndGlyphs" font-family='"DejaVu Sans Mono", "Liberation Mono", monospace' stroke="#d8a0df" stroke-width=".3">return</text>
<text x="348.807" y="339.7" font-size="12.05" fill="#b8d7a3" textLength="43.518" lengthAdjust="spacingAndGlyphs" font-family='"DejaVu Sans Mono", "Liberation Mono", monospace' stroke="#b8d7a3" stroke-width=".3">Result</text>
<text x="392.325" y="339.7" font-size="12.05" fill="#dadada" textLength="79.783" lengthAdjust="spacingAndGlyphs" font-family='"DejaVu Sans Mono", "Liberation Mono", monospace' stroke="#dadada" stroke-width=".3">.Succeeded;</text>
<text x="166.2" y="356.59" font-size="12.05" fill="#b4b4b4" font-family='"DejaVu Sans Mono", "Liberation Mono", monospace' text-anchor="end" stroke="#b4b4b4" stroke-width=".25">12</text>
<text x="269.024" y="355.89" font-size="12.05" fill="#dadada" textLength="7.253" lengthAdjust="spacingAndGlyphs" font-family='"DejaVu Sans Mono", "Liberation Mono", monospace' stroke="#dadada" stroke-width=".3">}</text>
<text x="166.2" y="372.78" font-size="12.05" fill="#b4b4b4" font-family='"DejaVu Sans Mono", "Liberation Mono", monospace' text-anchor="end" stroke="#b4b4b4" stroke-width=".25">13</text>
<text x="240.012" y="372.08" font-size="12.05" fill="#dadada" textLength="7.253" lengthAdjust="spacingAndGlyphs" font-family='"DejaVu Sans Mono", "Liberation Mono", monospace' stroke="#dadada" stroke-width=".3">}</text>
<text x="166.2" y="388.97" font-size="12.05" fill="#b4b4b4" font-family='"DejaVu Sans Mono", "Liberation Mono", monospace' text-anchor="end" stroke="#b4b4b4" stroke-width=".25">14</text>
<text x="211" y="388.27" font-size="12.05" fill="#dadada" textLength="7.253" lengthAdjust="spacingAndGlyphs" font-family='"DejaVu Sans Mono", "Liberation Mono", monospace' stroke="#dadada" stroke-width=".3">}</text>
<text x="166.2" y="405.16" font-size="12.05" fill="#b4b4b4" font-family='"DejaVu Sans Mono", "Liberation Mono", monospace' text-anchor="end" stroke="#b4b4b4" stroke-width=".25">15</text>
<rect x="193" y="171" width="9.5" height="8" fill="#1e1e1e" />
<path d="M193.6 172.8 l4 4 l4-4" fill="none" stroke="#cfcfcf" stroke-width="1.3" />
<rect x="193" y="219.57" width="9.5" height="8" fill="#1e1e1e" />
<path d="M193.6 221.37 l4 4 l4-4" fill="none" stroke="#cfcfcf" stroke-width="1.3" />
<rect x="193" y="251.95" width="9.5" height="8" fill="#1e1e1e" />
<path d="M193.6 253.75 l4 4 l4-4" fill="none" stroke="#cfcfcf" stroke-width="1.3" />
<rect x="193" y="284.33" width="9.5" height="8" fill="#1e1e1e" />
<path d="M193.6 286.13 l4 4 l4-4" fill="none" stroke="#cfcfcf" stroke-width="1.3" />
<line x1="589.4" y1="312.8" x2="589.4" y2="326.2" stroke="#e8e8e8" stroke-width="1.1" />
<rect x="113.5" y="251.25" width="8.8" height="8.7" fill="#3f8bd2" />
<rect x="116.9" y="252.35" width="2" height="6.6" fill="#7fb6e8" />
<path d="M125.9 259.95 v-8 M124 253.95 l1.9-2.2 l1.9 2.2" fill="none" stroke="#d6d6d6" stroke-width="1.2" />
<rect x="113.5" y="283.63" width="8.8" height="8.7" fill="#3f8bd2" />
<rect x="116.9" y="284.73" width="2" height="6.6" fill="#7fb6e8" />
<path d="M125.9 292.33 v-8 M124 286.33 l1.9-2.2 l1.9 2.2" fill="none" stroke="#d6d6d6" stroke-width="1.2" />
<circle cx="174.4" cy="318.11" r="4.5" fill="none" stroke="#b5a767" stroke-width="1.3" />
<path d="M172.6 322.51 v3 h3.6 v-3 M172.8 326.91 h3.2 M174.4 319.11 v3" fill="none" stroke="#b5a767" stroke-width="1.1" />
<circle cx="174.4" cy="317.91" r="1.1" fill="#b5a767" />
<rect x="1262.6" y="166.1" width="18" height="528.2" fill="#2b2b2b" />
<rect x="1267.4" y="179.6" width="10.2" height="321.6" fill="#4b4b4b" />
<path d="M1268.7 174.9h6.2l-3.1 -3.4z" fill="#9a9a9a" />
<path d="M1268.4 686 h6.8 l-3.4 3.8z" fill="#9a9a9a" />
<rect x="1263.6" y="180" width="3.3" height="14" fill="none" stroke="#94812d" stroke-width="1"/>
<rect x="1263.6" y="199.4" width="3.3" height="62" fill="none" stroke="#94812d" stroke-width="1"/>
<rect x="1263.4" y="198.6" width="3.8" height="2.8" fill="#45a045" />
<rect x="1263.2" y="247.6" width="17.2" height="2" fill="#f0f0f0" />
<rect x="96" y="694.3" width="1184.6" height="13.3" fill="#2b2b2b" />
<rect x="96" y="694.3" width="44" height="13.3" fill="#333333" />
<text x="97.8" y="704.4" font-size="9.2" fill="#d8d8d8" textLength="22.2" lengthAdjust="spacingAndGlyphs"  stroke="#d8d8d8" stroke-width=".18">128 %</text>
<path d="M133.9 700.2h4.2l-2.1 2.4z" fill="#c8c8c8" />
<path d="M144 705.2 q-1-7.6 3.4-8 q3.6.2 3.4 4.2 l-1.2 3.8z" fill="#443e78" />
<path d="M145.6 703.4 l3-3.6" fill="none" stroke="#2a2650" stroke-width="1" />
<circle cx="176.6" cy="701" r="4.2" fill="#3fae55" />
<path d="M174.5 701 l1.6 1.7 l2.7-3" fill="none" stroke="#f4f4f4" stroke-width="1.2" />
<text x="185" y="704.4" font-size="9.2" fill="#dcdcdc" textLength="93" lengthAdjust="spacingAndGlyphs"  stroke="#dcdcdc" stroke-width=".18">Проблемы не найдены.</text>
<line x1="290.4" y1="696.5" x2="290.4" y2="705.6" stroke="#6a6a6a" stroke-width="1" />
<path d="M310.8 696.2 l-4.4 4.8" fill="none" stroke="#d8d8d8" stroke-width="1.4" />
<path d="M305.2 699.6 l2.8 2.6 l-3.4 3.8 l-3.2-3z" fill="#d9c77a" />
<path d="M302.6 696.6 v1.6 M301.8 697.4 h1.6 M305.6 695.6 v1.2" fill="none" stroke="#a8a8a8" stroke-width="0.8" />
<path d="M314.5 700.2h4.2l-2.1 2.4z" fill="#c8c8c8" />
<path d="M346 698.4 v5.2 l-3.6-2.6z" fill="#707070" />
<path d="M1088 698.4 v5.2 l3.6-2.6z" fill="#707070" />
<text x="1113" y="704.4" font-size="9.2" fill="#d0d0d0" textLength="28" lengthAdjust="spacingAndGlyphs"  stroke="#d0d0d0" stroke-width=".18">Стр: 10</text>
<text x="1154" y="704.4" font-size="9.2" fill="#d0d0d0" textLength="34" lengthAdjust="spacingAndGlyphs"  stroke="#d0d0d0" stroke-width=".18">Симв: 53</text>
<line x1="1195" y1="695" x2="1195" y2="707" stroke="#3c3c3c" stroke-width="1" />
<text x="1202" y="704.4" font-size="9.2" fill="#d0d0d0" textLength="37" lengthAdjust="spacingAndGlyphs"  stroke="#d0d0d0" stroke-width=".18">Пробелы</text>
<line x1="1246.7" y1="695" x2="1246.7" y2="707" stroke="#3c3c3c" stroke-width="1" />
<text x="1254" y="704.4" font-size="9.2" fill="#d0d0d0" textLength="18.7" lengthAdjust="spacingAndGlyphs"  stroke="#d0d0d0" stroke-width=".18">CRLF</text>
<line x1="1286.4" y1="134" x2="1286.4" y2="444.4" stroke="#2f2f2f" stroke-width="1" />
<line x1="1286.4" y1="134" x2="1497" y2="134" stroke="#2a2a2a" stroke-width="1" />
<text x="1289.3" y="146.2" font-size="9.52" fill="#a6a6a6" textLength="97.1" lengthAdjust="spacingAndGlyphs"  stroke="#a6a6a6" stroke-width=".18">Обозреватель решений</text>
<path d="M1462 141.3 h5.4 l-2.7 3z" fill="#cfcfcf" />
<path d="M1475.4 139 h3.6 v4.6 h-3.6z M1474.4 143.8 h5.6 M1477.2 143.8 v3.2 M1478.2 139 v4.6" fill="none" stroke="#cfcfcf" stroke-width="1" />
<path d="M1486 139.2 l6.8 6.8 M1492.8 139.2 l-6.8 6.8" fill="none" stroke="#dcdcdc" stroke-width="1.3" />
<path d="M1296.6 155.6 h5.4 v8.6 h-3 M1298.8 155.6 v7 M1300.6 155.6 v7" fill="none" stroke="#d0d0d0" stroke-width="1.1" />
<path d="M1291 162.6 l3.6-2.6 v5.2z M1294.6 160 l2 1 v3.2 l-2 1" fill="none" stroke="#7b6fd6" stroke-width="1" />
<line x1="1308.5" y1="153.5" x2="1308.5" y2="168" stroke="#3a3a3a" stroke-width="1" />
<circle cx="1320.4" cy="162" r="4" fill="none" stroke="#c8c8c8" stroke-width="1.2" />
<path d="M1320.4 159.8 v2.4 h1.8" fill="none" stroke="#c8c8c8" stroke-width="1" />
<path d="M1314.4 155 h3.6 l-1.8 2.6z" fill="#3f8fd0" />
<path d="M1331.1 160.4h4.2l-2.1 2.4z" fill="#c8c8c8" />
<path d="M1341.4 159 h8.6 M1347.8 157 l2.4 2 l-2.4 2 M1350.4 163 h-8.6 M1343.8 161 l-2.4 2 l2.4 2" fill="none" stroke="#9c9c9c" stroke-width="1" />
<path d="M1366 157.4 a4.8 4.8 0 1 1 -4.4 -.6 M1361.6 154 v3.2 h-3" fill="none" stroke="#3a86c8" stroke-width="1.25" />
<rect x="1373.6" y="156.8" width="8.6" height="8" fill="none" stroke="#c8c8c8" stroke-width="1.1"/>
<path d="M1375.2 155 h8.8 v8 M1375.6 160.8 h4.6" fill="none" stroke="#c8c8c8" stroke-width="1.1" />
<rect x="1390.2" y="158.8" width="6.2" height="6.4" fill="none" stroke="#c8c8c8" stroke-width="1.1" rx=".8"/>
<path d="M1392.6 158.6 v-2.4 h7 v6.8 h-3" fill="none" stroke="#c8c8c8" stroke-width="1.1" />
<line x1="1406" y1="153.5" x2="1406" y2="168" stroke="#3a3a3a" stroke-width="1" />
<path d="M1415.8 158.8 l-2.2 2 l2.2 2 M1418.6 158.8 l2.2 2 l-2.2 2" fill="none" stroke="#a8a8a8" stroke-width="1" />
<path d="M1429.4 166.4 l5-5.2 q-1-3.2 2.6-4.2 l-1.2 2.4 l1.6 1.2 l2.2-1.4 q-.2 3.4-3.6 3.2 l-5 5.2z" fill="#c2c2c2" />
<rect x="1441.6" y="152.2" width="16.2" height="17" fill="#1c1c28" stroke="#4d4894" stroke-width="1.1"/>
<path d="M1445.2 164 h7.4 v-2.4 h-4.4 l-3 1.4z" fill="none" stroke="#b0b0b0" stroke-width="1" />
<path d="M1452.6 158.6 v1 M1454.6 160.6 h1 M1454.6 163.4 h1" fill="none" stroke="#a0a0a0" stroke-width="1" />
<rect x="1287" y="171.2" width="210" height="15.4" fill="#303030" />
<text x="1291.4" y="182.3" font-size="9.52" fill="#c0c0c0" textLength="166" lengthAdjust="spacingAndGlyphs"  stroke="#c0c0c0" stroke-width=".18">Обозреватель решений — поиск (Ctrl+;)</text>
<circle cx="1481.8" cy="177.4" r="2.6" fill="none" stroke="#dcdcdc" stroke-width="1.4" />
<line x1="1479.8" y1="179.6" x2="1476" y2="183.4" stroke="#dcdcdc" stroke-width="1.5" />
<path d="M1488.9 178h4.2l-2.1 2.4z" fill="#c8c8c8" />
<rect x="1287" y="287.44" width="210" height="14.2" fill="#333333" />
<rect x="1297.4" y="190.8" width="10.2" height="9.6" fill="none" stroke="#c8c8c8" stroke-width="1.1" rx="1"/>
<line x1="1297.4" y1="193.2" x2="1307.6" y2="193.2" stroke="#c8c8c8" stroke-width="1" />
<path d="M1302 197.8 l3-2 v4z M1305 195.8 l1.6.8 v2.4 l-1.6.8" fill="none" stroke="#8f7fe0" stroke-width="0.9" />
<text x="1312.3" y="199" font-size="9.52" fill="#e2e2e2" textLength="122" lengthAdjust="spacingAndGlyphs"  stroke="#e2e2e2" stroke-width=".18">Решение "Intro"  (1 проекта 1)</text>
<path d="M1299.4 207.32 v5 h-5z" fill="#dcdcdc" />
<rect x="1311" y="205.32" width="10.2" height="9.2" fill="none" stroke="#b8b8b8" stroke-width="1.1" rx="1"/>
<text x="1312.4" y="212.52" font-size="6.4" fill="#5bbf66" textLength="7.6" lengthAdjust="spacingAndGlyphs" font-weight="bold"  stroke="#5bbf66" stroke-width=".18">C#</text>
<text x="1325.8" y="213.12" font-size="9.52" fill="#f4f4f4" textLength="20.7" lengthAdjust="spacingAndGlyphs" font-weight="bold"  stroke="#f4f4f4" stroke-width=".18">Intro</text>
<path d="M1307.8 220.44 v7.2 l3.8-3.6z" fill="none" stroke="#cdcdcd" stroke-width="1.15" />
<path d="M1324 229.04 l5.2-5.4 q-1-3.4 2.6-4.4 l-1.2 2.4 l1.6 1.2 l2.2-1.4 q-.2 3.6-3.8 3.4 l-5 5.6z" fill="#cfcfcf" />
<text x="1339.2" y="227.24" font-size="9.52" fill="#e2e2e2" textLength="39.3" lengthAdjust="spacingAndGlyphs"  stroke="#e2e2e2" stroke-width=".18">Properties</text>
<path d="M1312.4 235.56 v5 h-5z" fill="#dcdcdc" />
<circle cx="1324.4" cy="236.56" r="1.6" fill="none" stroke="#d0d0d0" stroke-width="1" />
<circle cx="1324.4" cy="240.36" r="1.6" fill="none" stroke="#d0d0d0" stroke-width="1" />
<line x1="1326" y1="238.56" x2="1329" y2="238.56" stroke="#d0d0d0" stroke-width="1" />
<rect x="1329" y="235.56" width="6.4" height="5.6" fill="none" stroke="#d0d0d0" stroke-width="1.1"/>
<line x1="1329" y1="237.56" x2="1335.4" y2="237.56" stroke="#d0d0d0" stroke-width="1" />
<text x="1339.2" y="241.36" font-size="9.52" fill="#e2e2e2" textLength="31.6" lengthAdjust="spacingAndGlyphs"  stroke="#e2e2e2" stroke-width=".18">Ссылки</text>
<path d="M1321.4 248.68 v7.2 l3.8-3.6z" fill="none" stroke="#cdcdcd" stroke-width="1.15" />
<path d="M1339 247.68 h8.6 M1339 250.08 h3 M1343.6 250.08 h4 M1342.6 252.48 h5" fill="none" stroke="#d0d0d0" stroke-width="1" />
<circle cx="1339.6" cy="254.88" r="2.6" fill="#f0f0f0" />
<text x="1338.7" y="256.88" font-size="5" fill="#1e1e1e" font-weight="bold"  stroke="#1e1e1e" stroke-width=".18">i</text>
<text x="1352.6" y="255.48" font-size="9.52" fill="#e2e2e2" textLength="54.9" lengthAdjust="spacingAndGlyphs"  stroke="#e2e2e2" stroke-width=".18">Анализаторы</text>
<circle cx="1338.8" cy="266.4" r="1.5" fill="none" stroke="#d0d0d0" stroke-width="1" />
<line x1="1340.3" y1="266.4" x2="1343" y2="266.4" stroke="#d0d0d0" stroke-width="1" />
<rect x="1343" y="264" width="5" height="4.8" fill="none" stroke="#d0d0d0" stroke-width="1.1"/>
<text x="1352.6" y="269.6" font-size="9.52" fill="#e2e2e2" textLength="68.4" lengthAdjust="spacingAndGlyphs"  stroke="#e2e2e2" stroke-width=".18">Microsoft.CSharp</text>
<circle cx="1338.8" cy="280.52" r="1.5" fill="none" stroke="#d0d0d0" stroke-width="1" />
<line x1="1340.3" y1="280.52" x2="1343" y2="280.52" stroke="#d0d0d0" stroke-width="1" />
<rect x="1343" y="278.12" width="5" height="4.8" fill="none" stroke="#d0d0d0" stroke-width="1.1"/>
<text x="1352.6" y="283.72" font-size="9.52" fill="#e2e2e2" textLength="32.6" lengthAdjust="spacingAndGlyphs"  stroke="#e2e2e2" stroke-width=".18">RevitAPI</text>
<circle cx="1338.8" cy="294.64" r="1.5" fill="none" stroke="#d0d0d0" stroke-width="1" />
<line x1="1340.3" y1="294.64" x2="1343" y2="294.64" stroke="#d0d0d0" stroke-width="1" />
<rect x="1343" y="292.24" width="5" height="4.8" fill="none" stroke="#d0d0d0" stroke-width="1.1"/>
<text x="1352.6" y="297.84" font-size="9.52" fill="#e2e2e2" textLength="40.9" lengthAdjust="spacingAndGlyphs"  stroke="#e2e2e2" stroke-width=".18">RevitAPIUI</text>
<circle cx="1338.8" cy="308.76" r="1.5" fill="none" stroke="#d0d0d0" stroke-width="1" />
<line x1="1340.3" y1="308.76" x2="1343" y2="308.76" stroke="#d0d0d0" stroke-width="1" />
<rect x="1343" y="306.36" width="5" height="4.8" fill="none" stroke="#d0d0d0" stroke-width="1.1"/>
<text x="1352.6" y="311.96" font-size="9.52" fill="#e2e2e2" textLength="28" lengthAdjust="spacingAndGlyphs"  stroke="#e2e2e2" stroke-width=".18">System</text>
<circle cx="1338.8" cy="322.88" r="1.5" fill="none" stroke="#d0d0d0" stroke-width="1" />
<line x1="1340.3" y1="322.88" x2="1343" y2="322.88" stroke="#d0d0d0" stroke-width="1" />
<rect x="1343" y="320.48" width="5" height="4.8" fill="none" stroke="#d0d0d0" stroke-width="1.1"/>
<text x="1352.6" y="326.08" font-size="9.52" fill="#e2e2e2" textLength="49.1" lengthAdjust="spacingAndGlyphs"  stroke="#e2e2e2" stroke-width=".18">System.Core</text>
<circle cx="1338.8" cy="337" r="1.5" fill="none" stroke="#d0d0d0" stroke-width="1" />
<line x1="1340.3" y1="337" x2="1343" y2="337" stroke="#d0d0d0" stroke-width="1" />
<rect x="1343" y="334.6" width="5" height="4.8" fill="none" stroke="#d0d0d0" stroke-width="1.1"/>
<text x="1352.6" y="340.2" font-size="9.52" fill="#e2e2e2" textLength="48" lengthAdjust="spacingAndGlyphs"  stroke="#e2e2e2" stroke-width=".18">System.Data</text>
<circle cx="1338.8" cy="351.12" r="1.5" fill="none" stroke="#d0d0d0" stroke-width="1" />
<line x1="1340.3" y1="351.12" x2="1343" y2="351.12" stroke="#d0d0d0" stroke-width="1" />
<rect x="1343" y="348.72" width="5" height="4.8" fill="none" stroke="#d0d0d0" stroke-width="1.1"/>
<text x="1352.6" y="354.32" font-size="9.52" fill="#e2e2e2" textLength="122" lengthAdjust="spacingAndGlyphs"  stroke="#e2e2e2" stroke-width=".18">System.Data.DataSetExtensions</text>
<circle cx="1338.8" cy="365.24" r="1.5" fill="none" stroke="#d0d0d0" stroke-width="1" />
<line x1="1340.3" y1="365.24" x2="1343" y2="365.24" stroke="#d0d0d0" stroke-width="1" />
<rect x="1343" y="362.84" width="5" height="4.8" fill="none" stroke="#d0d0d0" stroke-width="1.1"/>
<text x="1352.6" y="368.44" font-size="9.52" fill="#e2e2e2" textLength="64.4" lengthAdjust="spacingAndGlyphs"  stroke="#e2e2e2" stroke-width=".18">System.Net.Http</text>
<circle cx="1338.8" cy="379.36" r="1.5" fill="none" stroke="#d0d0d0" stroke-width="1" />
<line x1="1340.3" y1="379.36" x2="1343" y2="379.36" stroke="#d0d0d0" stroke-width="1" />
<rect x="1343" y="376.96" width="5" height="4.8" fill="none" stroke="#d0d0d0" stroke-width="1.1"/>
<text x="1352.6" y="382.56" font-size="9.52" fill="#e2e2e2" textLength="45.7" lengthAdjust="spacingAndGlyphs"  stroke="#e2e2e2" stroke-width=".18">System.Xml</text>
<circle cx="1338.8" cy="393.48" r="1.5" fill="none" stroke="#d0d0d0" stroke-width="1" />
<line x1="1340.3" y1="393.48" x2="1343" y2="393.48" stroke="#d0d0d0" stroke-width="1" />
<rect x="1343" y="391.08" width="5" height="4.8" fill="none" stroke="#d0d0d0" stroke-width="1.1"/>
<text x="1352.6" y="396.68" font-size="9.52" fill="#e2e2e2" textLength="65.4" lengthAdjust="spacingAndGlyphs"  stroke="#e2e2e2" stroke-width=".18">System.Xml.Linq</text>
<path d="M1307.8 404 v7.2 l3.8-3.6z" fill="none" stroke="#cdcdcd" stroke-width="1.15" />
<text x="1323.8" y="410.6" font-size="8.56" fill="#4f9e5c"  stroke="#4f9e5c" stroke-width=".18">C</text>
<path d="M1330.6 406.3 h4 M1330.6 408.6 h4" fill="none" stroke="#4f9e5c" stroke-width="1.1" />
<text x="1339.2" y="410.8" font-size="9.52" fill="#e2e2e2" textLength="72.8" lengthAdjust="spacingAndGlyphs"  stroke="#e2e2e2" stroke-width=".18">CommandClass.cs</text>
<line x1="1286.4" y1="444.4" x2="1497" y2="444.4" stroke="#323232" stroke-width="1" />
<path d="M1354.2 444.4 V460.3 H1425.5 V444.4" fill="none" stroke="#323232" stroke-width="1" />
<rect x="1354.7" y="443.6" width="70.3" height="1.6" fill="#1e1e1e" />
<text x="1290" y="454.8" font-size="9.52" fill="#8f8f8f" textLength="59.4" lengthAdjust="spacingAndGlyphs"  stroke="#8f8f8f" stroke-width=".18">Изменения Git</text>
<text x="1358.4" y="454.8" font-size="9.52" fill="#f0f0f0" textLength="59.4" lengthAdjust="spacingAndGlyphs"  stroke="#f0f0f0" stroke-width=".18">Обозревател...</text>
<text x="1430.5" y="454.8" font-size="9.52" fill="#8f8f8f" textLength="59.9" lengthAdjust="spacingAndGlyphs"  stroke="#8f8f8f" stroke-width=".18">Представлен...</text>
<path d="M1497 464.5 H1286.4 V706.8 H1497" fill="none" stroke="#303030" stroke-width="1" />
<text x="1289.3" y="476.8" font-size="9.52" fill="#a6a6a6" textLength="37.7" lengthAdjust="spacingAndGlyphs"  stroke="#a6a6a6" stroke-width=".18">Свойства</text>
<path d="M1462 472.1 h5.4 l-2.7 3z" fill="#cfcfcf" />
<path d="M1475.4 469.8 h3.6 v4.6 h-3.6z M1474.4 474.6 h5.6 M1477.2 474.6 v3.2 M1478.2 469.8 v4.6" fill="none" stroke="#cfcfcf" stroke-width="1" />
<path d="M1486 470 l6.8 6.8 M1492.8 470 l-6.8 6.8" fill="none" stroke="#dcdcdc" stroke-width="1.3" />
<rect x="1287" y="481.8" width="210" height="17" fill="#383838" />
<path d="M1490.5 489.2h4.2l-2.1 2.4z" fill="#c8c8c8" />
<rect x="1288.6" y="500.8" width="16.8" height="16.2" fill="#1c1c28" stroke="#4d4894" stroke-width="1.1"/>
<rect x="1291.8" y="503.6" width="3" height="3" fill="none" stroke="#b0b0b0" stroke-width="1"/>
<line x1="1297" y1="504.2" x2="1299.6" y2="504.2" stroke="#9a9a9a" stroke-width="1.2" />
<line x1="1297" y1="506.6" x2="1299.6" y2="506.6" stroke="#9a9a9a" stroke-width="1.2" />
<line x1="1301" y1="504.2" x2="1302.6" y2="504.2" stroke="#6a6a6a" stroke-width="1.2" />
<line x1="1301" y1="506.6" x2="1302.6" y2="506.6" stroke="#6a6a6a" stroke-width="1.2" />
<rect x="1291.8" y="510" width="3" height="3" fill="none" stroke="#b0b0b0" stroke-width="1"/>
<line x1="1297" y1="510.6" x2="1299.6" y2="510.6" stroke="#9a9a9a" stroke-width="1.2" />
<line x1="1297" y1="513" x2="1299.6" y2="513" stroke="#9a9a9a" stroke-width="1.2" />
<line x1="1301" y1="510.6" x2="1302.6" y2="510.6" stroke="#6a6a6a" stroke-width="1.2" />
<line x1="1301" y1="513" x2="1302.6" y2="513" stroke="#6a6a6a" stroke-width="1.2" />
<text x="1308.6" y="508.4" font-size="6" fill="#d8d8d8" font-weight="bold"  stroke="#d8d8d8" stroke-width=".18">A</text>
<text x="1308.8" y="515" font-size="6" fill="#d8d8d8" font-weight="bold"  stroke="#d8d8d8" stroke-width=".18">Z</text>
<path d="M1316.8 505.6 v7 M1314.6 510.4 l2.2 2.4 l2.2-2.4" fill="none" stroke="#38a0e4" stroke-width="1.4" />
<line x1="1325.4" y1="502" x2="1325.4" y2="516" stroke="#3a3a3a" stroke-width="1" />
<path d="M1329.6 514.8 l5.4-5.6 q-1-3.8 3-4.8 l-1.2 2.6 l1.6 1.2 l2.4-1.4 q-.2 4-4.2 3.8 l-5.2 5.6z" fill="#8c8c8c" stroke="#8c8c8c" stroke-width="1.2" stroke-linejoin="round"/>
<line x1="1287" y1="518.4" x2="1497" y2="518.4" stroke="#2c2c2c" stroke-width="1" />
<line x1="1287" y1="660.4" x2="1497" y2="660.4" stroke="#2c2c2c" stroke-width="1" />
<line x1="95.6" y1="712.2" x2="1497" y2="712.2" stroke="#303030" stroke-width="1" />
<line x1="95.6" y1="712.2" x2="95.6" y2="814" stroke="#2c2c2c" stroke-width="1" />
<text x="99" y="724.4" font-size="9.52" fill="#9a9a9a" textLength="26" lengthAdjust="spacingAndGlyphs"  stroke="#9a9a9a" stroke-width=".18">Вывод</text>
<path d="M1462 718.5 h5.4 l-2.7 3z" fill="#cfcfcf" />
<path d="M1475.4 716.2 h3.6 v4.6 h-3.6z M1474.4 721 h5.6 M1477.2 721 v3.2 M1478.2 716.2 v4.6" fill="none" stroke="#cfcfcf" stroke-width="1" />
<path d="M1486 716.4 l6.8 6.8 M1492.8 716.4 l-6.8 6.8" fill="none" stroke="#dcdcdc" stroke-width="1.3" />
<text x="101" y="742.4" font-size="9.2" fill="#cfcfcf" textLength="127" lengthAdjust="spacingAndGlyphs"  stroke="#cfcfcf" stroke-width=".18">Показать выходные данные из:</text>
<line x1="101" y1="743.8" x2="106" y2="743.8" stroke="#bdbdbd" stroke-width="0.8" />
<rect x="233" y="731.2" width="171.5" height="14.2" fill="#303030" />
<text x="236" y="742.4" font-size="9.52" fill="#e0e0e0" textLength="30.3" lengthAdjust="spacingAndGlyphs"  stroke="#e0e0e0" stroke-width=".18">Сборка</text>
<path d="M397.1 737.8h4.2l-2.1 2.4z" fill="#c8c8c8" />
<line x1="408.6" y1="732" x2="408.6" y2="745" stroke="#3a3a3a" stroke-width="1" />
<path d="M416 742.6 h8 M417.6 740.4 l2-4 2 4" fill="none" stroke="#3c3c3c" stroke-width="1.1" />
<line x1="431.6" y1="732" x2="431.6" y2="745" stroke="#3a3a3a" stroke-width="1" />
<rect x="438.4" y="739.4" width="8" height="3" fill="#cfcfcf" />
<line x1="438.4" y1="737.6" x2="446.4" y2="737.6" stroke="#bdbdbd" stroke-width="1" />
<path d="M441.4 734.6 h-4 M439 733.2 l-1.8 1.4 l1.8 1.4" fill="none" stroke="#58a6e0" stroke-width="1" />
<rect x="454.2" y="739.4" width="8" height="3" fill="#cfcfcf" />
<line x1="454.2" y1="737.6" x2="462.2" y2="737.6" stroke="#bdbdbd" stroke-width="1" />
<path d="M455.6 734.6 h4 M458 733.2 l1.8 1.4 l-1.8 1.4" fill="none" stroke="#4a93d2" stroke-width="1.1" />
<line x1="470.3" y1="732" x2="470.3" y2="745" stroke="#3a3a3a" stroke-width="1" />
<line x1="478.6" y1="734.6" x2="486.6" y2="734.6" stroke="#cfcfcf" stroke-width="1" />
<line x1="478.6" y1="737.1" x2="486.6" y2="737.1" stroke="#cfcfcf" stroke-width="1" />
<line x1="478.6" y1="739.6" x2="486.6" y2="739.6" stroke="#cfcfcf" stroke-width="1" />
<line x1="478.6" y1="742.1" x2="486.6" y2="742.1" stroke="#cfcfcf" stroke-width="1" />
<path d="M474.8 733.6 l3 3 M477.8 733.6 l-3 3" fill="none" stroke="#c8445a" stroke-width="1.2" />
<line x1="492.5" y1="732" x2="492.5" y2="745" stroke="#3a3a3a" stroke-width="1" />
<text x="498.4" y="738.2" font-size="5.6" fill="#cfcfcf" font-weight="bold"  stroke="#cfcfcf" stroke-width=".18">ab</text>
<text x="498.6" y="743.4" font-size="5.6" fill="#cfcfcf" font-weight="bold"  stroke="#cfcfcf" stroke-width=".18">c</text>
<path d="M509.4 735.6 v5.2 h-5 M506.4 738.8 l-2 2 l2 2" fill="none" stroke="#4a93d2" stroke-width="1.2" />
<line x1="514.9" y1="732" x2="514.9" y2="745" stroke="#3a3a3a" stroke-width="1" />
<circle cx="526.4" cy="738.4" r="4.8" fill="none" stroke="#b4b4b4" stroke-width="1.3" />
<path d="M526.4 735.4 v3.2 h2.4" fill="none" stroke="#b4b4b4" stroke-width="1.1" />
<rect x="96.1" y="748.3" width="1387.4" height="54.7" fill="#252526" />
<text x="120.608" y="755.9" font-size="8.7" fill="#d4d4d4" textLength="671.122" lengthAdjust="spacingAndGlyphs" font-family='"DejaVu Sans Mono", "Liberation Mono", monospace'  stroke="#d4d4d4" stroke-width=".18">ссылок, или использовать зависимость от ссылок с архитектурой процессора, соответствующей целевой архитектуре процессора проекта.</text>
<text x="105" y="767" font-size="8.7" fill="#d4d4d4" textLength="478.63" lengthAdjust="spacingAndGlyphs" font-family='"DejaVu Sans Mono", "Liberation Mono", monospace'  stroke="#d4d4d4" stroke-width=".18">1&gt;  Intro -&gt; C:\Users\shvetses\Desktop\Новая папка3\RevitAPI\Intro\Intro\bin\Debug\Intro.dll</text>
<text x="105" y="778.1" font-size="8.7" fill="#d4d4d4" textLength="410.997" lengthAdjust="spacingAndGlyphs" font-family='"DejaVu Sans Mono", "Liberation Mono", monospace'  stroke="#d4d4d4" stroke-width=".18">========== Перестроить все: успешно — 1, неудачно — 0, пропущено — 0 ==========</text>
<text x="105" y="789.2" font-size="8.7" fill="#d4d4d4" textLength="358.972" lengthAdjust="spacingAndGlyphs" font-family='"DejaVu Sans Mono", "Liberation Mono", monospace'  stroke="#d4d4d4" stroke-width=".18">========== Перестроить завершено в 17:52 и заняло 02,952 с ==========</text>
<rect x="1483.5" y="748.3" width="13.5" height="54.7" fill="#2b2b2b" />
<path d="M1487.3 756.3h6.2l-3.1 -3.4z" fill="#9a9a9a" />
<rect x="1486.4" y="778.3" width="8.4" height="4.2" fill="#555555" />
<rect x="1483.5" y="782.5" width="13.5" height="2.2" fill="#f0f0f0" />
<path d="M1487.3 795 h6.4 l-3.2 3.4z" fill="#9a9a9a" />
<rect x="96.1" y="803" width="1400.9" height="11" fill="#2e2e2e" />
<path d="M104.4 805.8 v5 l-3.6-2.5z" fill="#8a8a8a" />
<path d="M1475.6 805.8 v5 l3.6-2.5z" fill="#8a8a8a" />
<path d="M1439.6 225.8 v11.4 l2.6-2.4 l1.8 4 l1.7-.8 l-1.8-3.9 h3.5z" fill="#f4f4f4" stroke="#111" stroke-width="0.8" />
</g>
<use href="#vsframe" x="0.72" y="0.72" opacity="0.5"/>
<use href="#vsframe" x="0.72" y="0" opacity="0.3333"/>
<use href="#vsframe" x="0" y="0.72" opacity="0.25"/>
</svg>
<div class="topline"></div>
<div class="controls">
  <svg class="ic" width="1430" height="42" viewBox="0 0 1430 42">
    <rect x="21" y="13" width="5" height="15" fill="#000"/>
    <rect x="29.1" y="13" width="5.1" height="15" fill="#000"/>
    <path d="M76 17 h4.4 l5.7-4.8 v16.3 l-5.7-4.8 h-4.4z" fill="#000"/>
    <path d="M87.4 15.7 C89.7 16.8 91.1 18.4 91.1 20.35 C91.1 22.3 89.7 23.9 87.4 25z" fill="#000"/>
    <rect x="1335.95" y="12.05" width="20.9" height="16.8" rx="2" fill="none" stroke="#000" stroke-width="2.1"/>
    <rect x="1345.4" y="19.3" width="8.3" height="6.5" fill="#000"/>
    <path d="M1396.05 18.3 v-4.05 h4.7 M1404.25 14.25 h4.7 v4.05 M1408.95 22.8 v4.05 h-4.7 M1400.75 26.85 h-4.7 v-4.05" fill="none" stroke="#000" stroke-width="2.1"/>
  </svg>
  <div class="bar"><i style="left:537.6px;width:2.3px;background:#a3adbe"></i><i style="left:539.9px;width:9.3px;background:#7f8ca8"></i><i style="left:549.2px;width:4.8px;background:#95a1b5"></i><i style="left:554px;width:6px;background:#7f8ca8"></i><i style="left:560px;width:7px;background:#95a1b5"></i><i style="left:567px;width:3.1px;background:#7f8ca8"></i><div class="played"></div><div class="knob"></div></div>
  <div class="t" style="left:1122.6px;top:10.2px;font-size:18px;line-height:20px;">-48:40</div>
  <div class="t" style="left:1209.5px;top:8.5px;font-size:20.5px;line-height:24px;">1x</div>
  <div class="t" style="left:1254.5px;top:8.5px;font-size:20.5px;line-height:24px;letter-spacing:0.3px;">720px</div>
</div>
</div>
<div class="footer"></div>
</body>
</html>
